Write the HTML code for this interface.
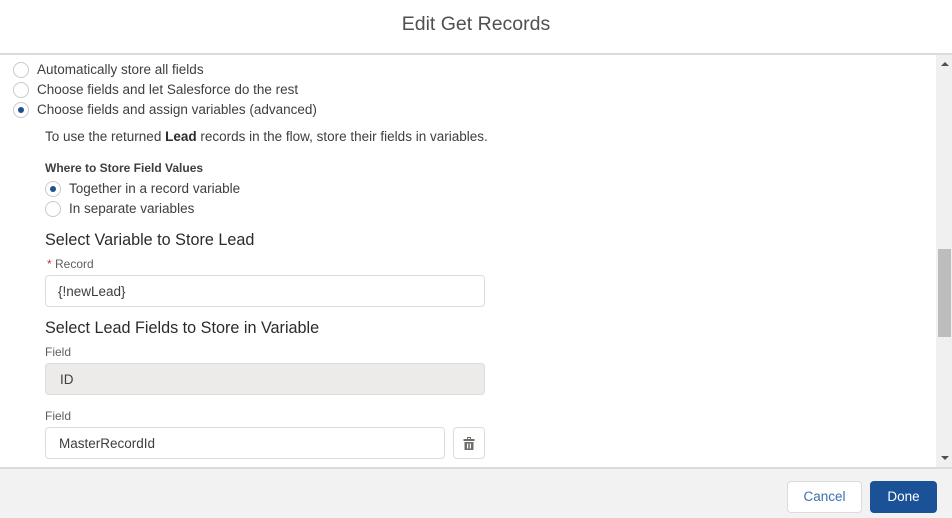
<!DOCTYPE html>
<html><head><style>
*{margin:0;padding:0;box-sizing:border-box}
body{width:952px;height:518px;overflow:hidden;background:#fff;font-family:"Liberation Sans",sans-serif;color:#3e3e3c;position:relative}
.a{position:absolute;white-space:nowrap}
.t{font-size:13.5px;color:#3e3e3c}
.r{position:absolute;width:16px;height:16px;border:1px solid #c9c9c9;border-radius:50%;background:#fff}
.r.on::after{content:"";position:absolute;left:4px;top:4px;width:6px;height:6px;border-radius:50%;background:#1b5297}
.in{position:absolute;border:1px solid #dddbda;border-radius:4px;background:#fff;font-size:13.5px;color:#3e3e3c;padding-left:12px;display:flex;align-items:center}
.lbl{font-size:12px;color:#5f5f5f}
.h{font-size:16.2px;color:#2b2b2b}
</style></head><body>
<div class="a" style="left:0;top:0;width:952px;height:53px;text-align:center;line-height:48px;font-size:19.5px;color:#505050">Edit Get Records</div>
<div class="a" style="left:0;top:53px;width:952px;height:2px;background:#dddbda"></div>

<div class="r" style="left:13px;top:62px"></div><div class="a t" style="left:37px;top:62px">Automatically store all fields</div>
<div class="r" style="left:13px;top:82px"></div><div class="a t" style="left:37px;top:82px">Choose fields and let Salesforce do the rest</div>
<div class="r on" style="left:13px;top:102px"></div><div class="a t" style="left:37px;top:102px">Choose fields and assign variables (advanced)</div>
<div class="a t" style="left:45px;top:129px">To use the returned <b style="color:#2b2b2b">Lead</b> records in the flow, store their fields in variables.</div>
<div class="a" style="left:45px;top:161px;font-size:12px;font-weight:bold;color:#3e3e3c">Where to Store Field Values</div>
<div class="r on" style="left:45px;top:181px"></div><div class="a t" style="left:69px;top:181px">Together in a record variable</div>
<div class="r" style="left:45px;top:201px"></div><div class="a t" style="left:69px;top:201px">In separate variables</div>
<div class="a h" style="left:45px;top:231px">Select Variable to Store Lead</div>
<div class="a lbl" style="left:47px;top:257px"><span style="color:#c23934">*</span> Record</div>
<div class="in" style="left:45px;top:275px;width:440px;height:32px">{!newLead}</div>
<div class="a h" style="left:45px;top:319px">Select Lead Fields to Store in Variable</div>
<div class="a lbl" style="left:45px;top:345px">Field</div>
<div class="in" style="left:45px;top:363px;width:440px;height:32px;background:#ecebea;padding-left:14px">ID</div>
<div class="a lbl" style="left:45px;top:409px">Field</div>
<div class="in" style="left:45px;top:427px;width:400px;height:32px;padding-left:13px">MasterRecordId</div>
<div class="in" style="left:453px;top:427px;width:32px;height:32px;padding:0;justify-content:center">
<svg width="12" height="13" viewBox="0 0 12 13"><rect x="4.5" y="0.5" width="3" height="2" fill="none" stroke="#706e6b" stroke-width="1"/><rect x="0.5" y="2" width="11" height="2" fill="#706e6b"/><path d="M1.5 5h9v8h-9z" fill="#706e6b"/><rect x="4" y="6.5" width="1.2" height="5" fill="#fff"/><rect x="6.8" y="6.5" width="1.2" height="5" fill="#fff"/></svg></div>

<div class="a" style="left:936px;top:55px;width:16px;height:412px;background:#f0f0f0"></div>
<div class="a" style="left:938px;top:249px;width:13px;height:88px;background:#bdbdbd"></div>
<div class="a" style="left:941px;top:62px;width:0;height:0;border-left:4px solid transparent;border-right:4px solid transparent;border-bottom:4px solid #505050"></div>
<div class="a" style="left:941px;top:456px;width:0;height:0;border-left:4px solid transparent;border-right:4px solid transparent;border-top:4px solid #505050"></div>

<div class="a" style="left:0;top:467px;width:952px;height:2px;background:#dddbda"></div>
<div class="a" style="left:0;top:469px;width:952px;height:49px;background:#f3f2f2"></div>
<div class="a" style="left:787px;top:481px;width:75px;height:32px;border:1px solid #dddbda;border-radius:4px;background:#fff;color:#3b6fb0;font-size:13.5px;text-align:center;line-height:30px">Cancel</div>
<div class="a" style="left:870px;top:481px;width:67px;height:32px;border-radius:4px;background:#1b5297;color:#fff;font-size:13.5px;text-align:center;line-height:32px">Done</div>
</body></html>
